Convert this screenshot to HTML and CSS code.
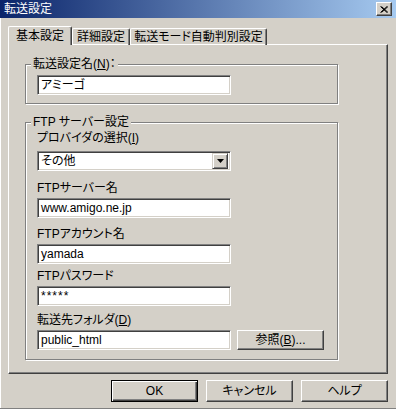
FILE: index.html
```html
<!DOCTYPE html>
<html lang="ja">
<head>
    <meta charset="UTF-8">
    <title>転送設定</title>
    <link rel="stylesheet" href="styles.css">
</head>
<body>
    <div class="window">
        <div class="titlebar">
            <span class="title">転送設定</span>
            <span class="close-btn">
                <svg width="8" height="7" viewBox="0 0 8 7"><path d="M0.5 0.5 L7 6.5 M1.5 0.5 L8 6.5 M7 0.5 L0.5 6.5 M8 0.5 L1.5 6.5" stroke="#000" stroke-width="1"/></svg>
            </span>
        </div>

        <div class="main">
            <div class="tabs">
                <div class="tab active tab-basic">基本設定</div>
                <div class="tab tab-detail">詳細設定</div>
                <div class="tab tab-mode">転送モード自動判別設定</div>
            </div>

            <div class="panel">
                <div class="group">
                    <div class="group-title">転送設定名(<u>N</u>)：</div>
                    <div class="field name-field">アミーゴ</div>
                </div>

                <div class="group ftp-group">
                    <div class="group-title">FTP サーバー設定</div>

                    <div class="label first">プロバイダの選択(<u>I</u>)</div>
                    <div class="field select">
                        <span class="select-text">その他</span>
                        <span class="drop-btn">
                            <svg width="7" height="4" viewBox="0 0 7 4"><path d="M0 0 H7 L3.5 4 Z" fill="#000"/></svg>
                        </span>
                    </div>

                    <div class="label after-select">FTPサーバー名</div>
                    <div class="field">www.amigo.ne.jp</div>

                    <div class="label after-server">FTPアカウント名</div>
                    <div class="field">yamada</div>

                    <div class="label after-account">FTPパスワード</div>
                    <div class="field password">*****</div>

                    <div class="label after-password">転送先フォルダ(<u>D</u>)</div>
                    <div class="folder-row">
                        <div class="field">public_html</div>
                        <div class="btn browse-btn">参照(<u>B</u>)...</div>
                    </div>
                </div>
            </div>

            <div class="buttons">
                <div class="btn default">OK</div>
                <div class="btn">キャンセル</div>
                <div class="btn">ヘルプ</div>
            </div>
        </div>
    </div>
</body>
</html>
```

FILE: styles.css
```css
body {
    margin: 0;
    background-color: #d4d0c8;
    font-family: "Liberation Sans", "Noto Sans CJK JP", sans-serif;
    font-size: 12px;
    color: #000;
    font-feature-settings: "palt";
}
.window {
    width: 396px;
    height: 409px;
    box-sizing: border-box;
    border-bottom: 1px solid #808080;
    display: flex;
    flex-direction: column;
}
.titlebar {
    height: 18px;
    flex-shrink: 0;
    display: flex;
    align-items: center;
    justify-content: space-between;
    padding: 0 4px;
    background: linear-gradient(to right, #0a246a, #a6caf0);
    color: #fff;
}
.title {
    line-height: 13px;
}
.close-btn {
    width: 16px;
    height: 14px;
    box-sizing: border-box;
    display: flex;
    align-items: center;
    justify-content: center;
    background-color: #d4d0c8;
    border: 1px solid;
    border-color: #fff #404040 #404040 #fff;
    box-shadow: inset -1px -1px 0 #808080;
}
.main {
    flex-grow: 1;
    border-left: 1px solid #fff;
    padding: 8px 8px 0 7px;
}

/* タブ */
.tabs {
    display: flex;
    align-items: flex-end;
    height: 19px;
}
.tab {
    height: 17px;
    box-sizing: border-box;
    border: 1px solid;
    border-bottom: none;
    border-color: #fff #404040 #404040 #fff;
    border-radius: 2px 2px 0 0;
    box-shadow: inset -1px 0 0 #808080;
    padding-top: 2px;
    line-height: 13px;
    text-align: center;
    white-space: nowrap;
}
.tab.active {
    height: 19px;
    padding-top: 3px;
    position: relative;
    z-index: 1;
    background-color: #d4d0c8;
}
.tab-basic { width: 64px; }
.tab-detail { width: 58px; }
.tab-mode { width: 137px; }

.panel {
    height: 330px;
    box-sizing: border-box;
    margin-top: -1px;
    border: 1px solid;
    border-color: #fff #404040 #404040 #fff;
    box-shadow: inset -1px -1px 0 #808080;
    padding: 19px 0 0 16px;
}

/* グループボックス */
.group {
    width: 313px;
    box-sizing: border-box;
    border: 1px solid #808080;
    box-shadow: inset 1px 1px 0 #fff, 1px 1px 0 #fff;
    padding: 0 0 8px 11px;
}
.group + .group {
    margin-top: 18px;
}
.ftp-group {
    padding-bottom: 9px;
}
.group-title {
    width: fit-content;
    margin: -7px 0 0 -6px;
    padding: 0 2px;
    background-color: #d4d0c8;
    line-height: 13px;
    white-space: nowrap;
}
.label {
    line-height: 13px;
    margin-bottom: 3px;
    white-space: nowrap;
}
.label.first { margin-top: 3px; margin-bottom: 6px; }
.label.after-select { margin-top: 11px; }
.label.after-server { margin-top: 10px; }
.label.after-account { margin-top: 6px; }
.label.after-password { margin-top: 8px; }

.field {
    width: 194px;
    height: 20px;
    box-sizing: border-box;
    border: 1px solid;
    border-color: #808080 #fff #fff #808080;
    box-shadow: inset 1px 1px 0 #404040, inset -1px -1px 0 #d4d0c8;
    background-color: #fff;
    padding: 0 3px;
    line-height: 18px;
    white-space: nowrap;
}
.name-field {
    margin-top: 4px;
}
.password {
    letter-spacing: 1px;
}
.select {
    display: flex;
    align-items: center;
    justify-content: space-between;
    padding: 0 2px 0 3px;
}
.drop-btn {
    width: 16px;
    height: 16px;
    box-sizing: border-box;
    display: flex;
    align-items: center;
    justify-content: center;
    background-color: #d4d0c8;
    border: 1px solid;
    border-color: #d4d0c8 #404040 #404040 #d4d0c8;
    box-shadow: inset 1px 1px 0 #fff, inset -1px -1px 0 #808080;
}
.folder-row {
    display: flex;
    gap: 6px;
}

/* ボタン */
.btn {
    width: 87px;
    height: 22px;
    box-sizing: border-box;
    border: 1px solid;
    border-color: #fff #404040 #404040 #fff;
    box-shadow: inset -1px -1px 0 #808080;
    display: flex;
    align-items: center;
    justify-content: center;
    line-height: 13px;
}
.btn.default {
    border-color: #000;
    box-shadow: inset 1px 1px 0 #fff, inset -1px -1px 0 #404040, inset -2px -2px 0 #808080;
}
.browse-btn {
    height: 20px;
}
.buttons {
    display: flex;
    justify-content: flex-end;
    gap: 8px;
    margin-top: 6px;
}
```
